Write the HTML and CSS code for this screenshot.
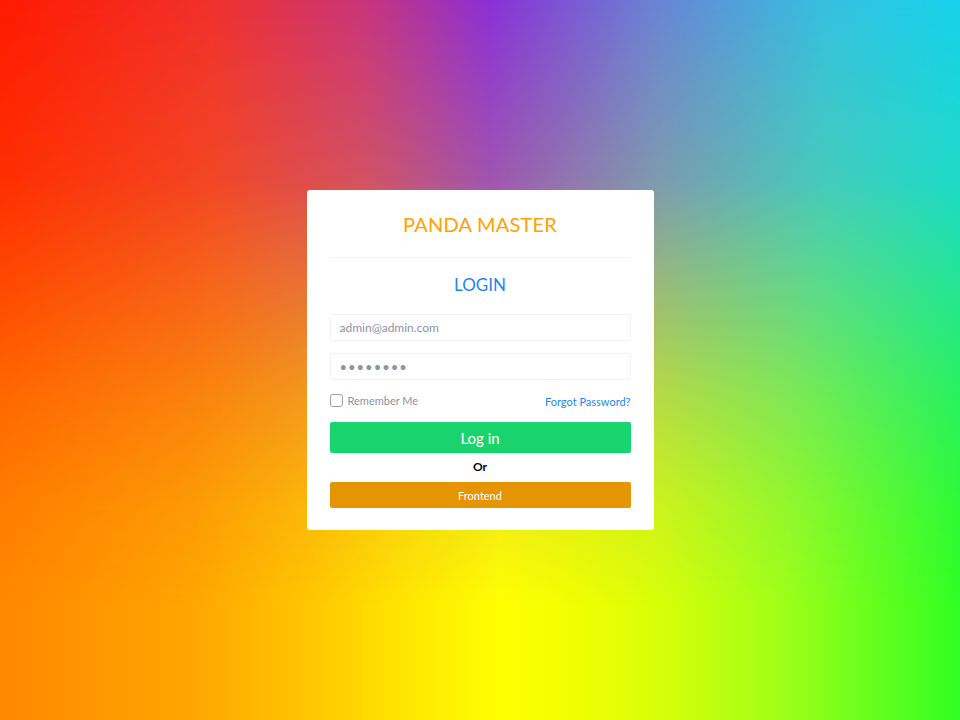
FILE: index.html
```html
<!DOCTYPE html>
<html lang="en">
<head>
<meta charset="utf-8">
<title>Panda Master · Login</title>
<link rel="stylesheet" href="styles.css">
</head>
<body>
<main class="page">
  <div class="wash" aria-hidden="true"></div>
  <div class="stage">
    <form class="card" action="#" onsubmit="return false">
      <h1 class="brand">PANDA MASTER</h1>
      <h2 class="heading">LOGIN</h2>
      <input class="field" type="email" placeholder="admin@admin.com">
      <input class="field field-pass" type="password" value="password">
      <div class="options">
        <label class="remember">
          <span class="check"></span>
          <span>Remember Me</span>
        </label>
        <a class="forgot" href="#">Forgot Password?</a>
      </div>
      <button class="btn btn-login" type="submit">Log in</button>
      <p class="or">Or</p>
      <a class="btn btn-front" href="#">Frontend</a>
    </form>
  </div>
</main>
</body>
</html>
```
FILE: styles.css
```css
* { box-sizing: border-box; }

html, body {
  margin: 0;
  height: 100%;
}

body {
  font-family: Lato, "Noto Sans", "Liberation Sans", sans-serif;
}

/* full-window stack: colour wash underneath, centred card on top */
.page {
  display: grid;
  min-height: 100vh;
  background: linear-gradient(to right,
    #ff8800 0%, #ffa600 20%, #ffc600 32%, #ffe600 42%, #ffff00 52%,
    #f0ff00 60%, #d6ff08 69%, #9cff18 82%, #30ff22 100%);
}

.page > * { grid-area: 1 / 1; }

.wash {
  z-index: 0;
  background: linear-gradient(to right,
    #ff1a00 0%, #f0302c 22%, #c8347a 38%, #8a2fd6 51%,
    #6a82d4 68%, #35c0e0 86%, #18d2ec 100%);
  -webkit-mask-image: linear-gradient(to bottom,
    #000 0%, rgba(0,0,0,.82) 25%, rgba(0,0,0,.56) 40%,
    rgba(0,0,0,.3) 55%, rgba(0,0,0,.1) 70%, rgba(0,0,0,0) 84%);
  mask-image: linear-gradient(to bottom,
    #000 0%, rgba(0,0,0,.82) 25%, rgba(0,0,0,.56) 40%,
    rgba(0,0,0,.3) 55%, rgba(0,0,0,.1) 70%, rgba(0,0,0,0) 84%);
}

.stage {
  z-index: 1;
  display: flex;
  align-items: center;
  justify-content: center;
}

.card {
  width: 347px;
  height: 340px;
  background: #fff;
  border-radius: 3px;
  padding: 22px 23px;
  display: flex;
  flex-direction: column;
}

.brand {
  margin: 0;
  padding-bottom: 21px;
  border-bottom: 1px solid #f2f2f2;
  font-size: 20px;
  line-height: 24px;
  font-weight: 400;
  color: #ffa200;
  text-align: center;
  letter-spacing: 0.2px;
}

.heading {
  margin: 15px 0 0;
  font-size: 17px;
  line-height: 24px;
  font-weight: 400;
  color: #1f86f0;
  text-align: center;
}

.field {
  display: block;
  width: 100%;
  height: 27px;
  margin-top: 17px;
  padding: 0 9px;
  border: 1px solid #f1f1f1;
  border-radius: 3px;
  font: inherit;
  font-size: 12px;
  color: #8b94a6;
  background: #fff;
  outline: none;
}

.field::placeholder { color: #8b94a6; }

.field-pass {
  margin-top: 12px;
  font-size: 13px;
  letter-spacing: 1px;
}

.options {
  margin-top: 13px;
  height: 15px;
  display: flex;
  align-items: center;
  justify-content: space-between;
  font-size: 11px;
}

.remember {
  display: flex;
  align-items: center;
  gap: 5px;
  color: #8b94a6;
}

.check {
  width: 13px;
  height: 13px;
  border: 1px solid #9aa2b2;
  border-radius: 3px;
}

.forgot {
  color: #1f86f0;
  text-decoration: none;
  padding-top: 2px;
}

.btn {
  display: flex;
  align-items: center;
  justify-content: center;
  width: 100%;
  border: 0;
  border-radius: 2px;
  color: #fff;
  font: inherit;
  text-decoration: none;
}

.btn-login {
  margin-top: 14px;
  height: 31px;
  background: #19d36c;
  font-size: 15px;
}

.or {
  margin: 6px 0 0;
  line-height: 16px;
  font-size: 12px;
  font-weight: 700;
  color: #000;
  text-align: center;
}

.btn-front {
  margin-top: 7px;
  height: 26px;
  background: #e59500;
  font-size: 11px;
}
```
